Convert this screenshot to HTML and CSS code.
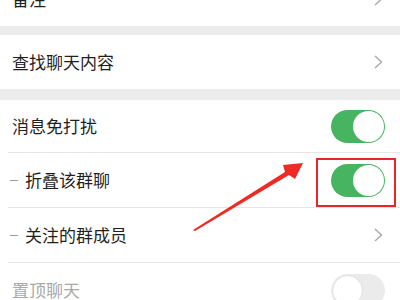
FILE: index.html
```html
<!DOCTYPE html>
<html lang="zh">
<head>
<meta charset="utf-8">
<link rel="stylesheet" href="styles.css">
</head>
<body>
<div class="page">
  <div class="group first">
    <div class="row"><span class="label">备注</span><svg class="chev" viewBox="0 0 9 14"><path d="M1 1l6.5 6-6.5 6" /></svg></div>
  </div>
  <div class="band b1"></div>
  <div class="group">
    <div class="row"><span class="label">查找聊天内容</span><svg class="chev" viewBox="0 0 9 14"><path d="M1 1l6.5 6-6.5 6" /></svg></div>
  </div>
  <div class="band b2"></div>
  <div class="group">
    <div class="row r3"><span class="label">消息免打扰</span><span class="switch on"><span class="knob"></span></span></div>
    <div class="sep"></div>
    <div class="row"><span class="dash"></span><span class="label sub">折叠该群聊</span><span class="switch on"><span class="knob"></span></span></div>
    <div class="sep"></div>
    <div class="row"><span class="dash"></span><span class="label sub">关注的群成员</span><svg class="chev" viewBox="0 0 9 14"><path d="M1 1l6.5 6-6.5 6" /></svg></div>
    <div class="sep"></div>
    <div class="row"><span class="label muted">置顶聊天</span><span class="switch off"><span class="knob"></span></span></div>
  </div>
</div>
<div class="highlight"></div>
<svg class="arrow" width="400" height="300" viewBox="0 0 400 300"><polygon points="193,230 285,172 283,165 303,163 295,179 289,175 195,231" /></svg>
</body>
</html>
```
FILE: styles.css
```css
html, body {
  margin: 0;
  padding: 0;
  background: #ffffff;
  overflow: hidden;
}
body {
  width: 400px;
  height: 300px;
  position: relative;
  font-family: "Noto Sans CJK SC", "Noto Sans", sans-serif;
}
.page {
  display: flex;
  flex-direction: column;
}
.group {
  background: #ffffff;
  display: flex;
  flex-direction: column;
}
.group.first {
  margin-top: -28px;
}
.band {
  background: #ececec;
}
.b1 { height: 9px; }
.b2 { height: 11px; }
.row {
  height: 54px;
  display: flex;
  align-items: center;
  padding-left: 12px;
  padding-right: 15px;
}
.row.r3 {
  height: 52px;
}
.sep {
  height: 1px;
  margin-left: 8px;
  background: #e6e6e6;
}
.label {
  font-size: 17px;
  color: #1f1f1f;
  flex: 1;
  line-height: 20px;
}
.label.sub {
  margin-left: 7px;
}
.label.muted {
  color: #a9a9a9;
}
.dash {
  width: 8px;
  height: 1px;
  background: #9a9a9a;
  margin-left: -2px;
}
.chev {
  width: 9px;
  height: 14px;
  margin-right: 2px;
  fill: none;
  stroke: #a8a8a8;
  stroke-width: 1.4;
}
.switch {
  width: 54px;
  height: 33px;
  border-radius: 17px;
  box-sizing: border-box;
  display: flex;
  align-items: center;
  padding: 1px;
}
.switch.on {
  background: #47b462;
  justify-content: flex-end;
}
.switch.off {
  background: #ebebeb;
  justify-content: flex-start;
}
.knob {
  width: 31px;
  height: 31px;
  border-radius: 50%;
  background: #ffffff;
  box-sizing: border-box;
}
.switch.off .knob {
  border: 1px solid #e0e0e0;
}
.highlight {
  position: absolute;
  left: 316px;
  top: 158px;
  width: 80px;
  height: 49px;
  box-sizing: border-box;
  border: 2px solid #e5262a;
}
.arrow {
  position: absolute;
  left: 0;
  top: 0;
}
.arrow polygon {
  fill: #ef2a24;
}
```
